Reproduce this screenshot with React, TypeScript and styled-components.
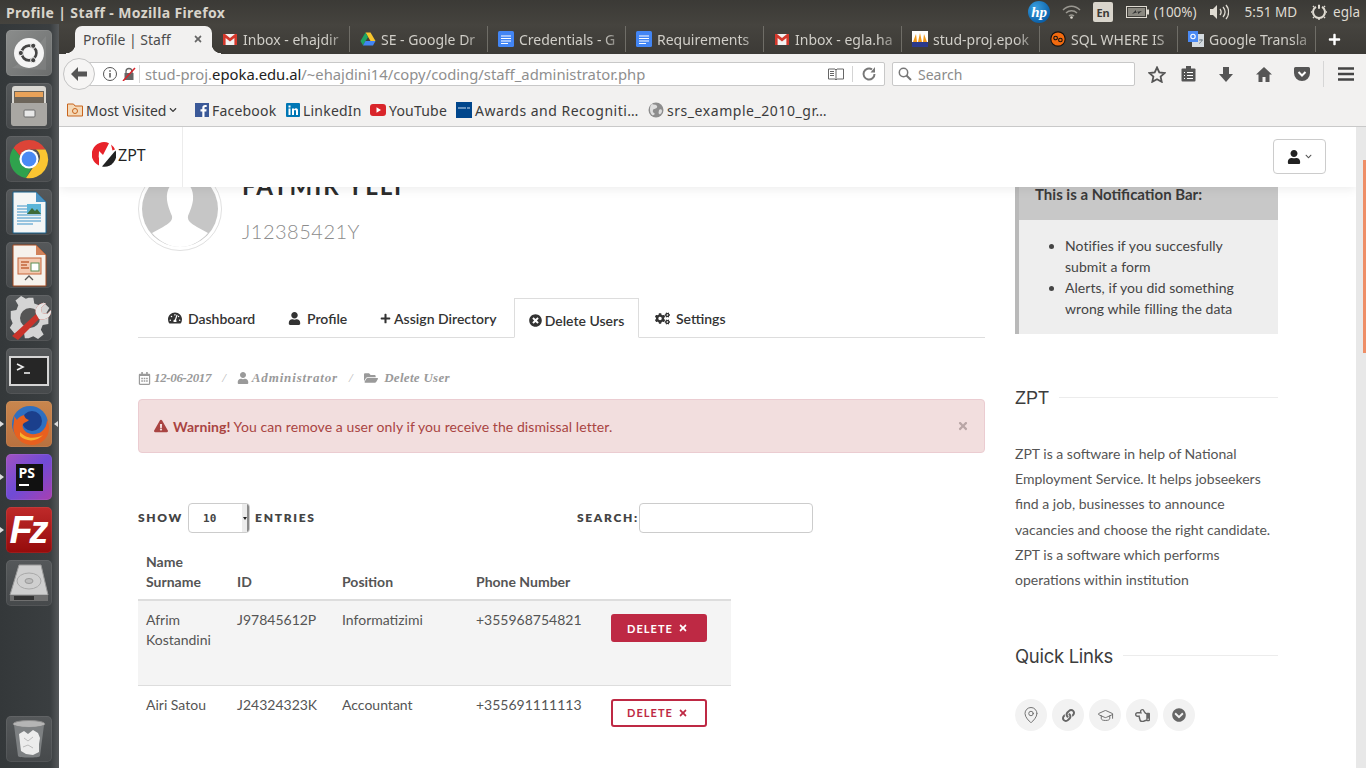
import React from "react";
import styled, { createGlobalStyle } from "styled-components";
import {
  FaTachometerAlt, FaUser, FaPlus, FaTimesCircle, FaCogs, FaRegCalendarAlt, FaFolderOpen,
  FaExclamationTriangle, FaTimes, FaLink, FaRegHandPointLeft, FaChevronCircleDown, FaChevronDown,
} from "react-icons/fa";
import { MapPin, GraduationCap } from "lucide-react";

const UI = `"Noto Sans", "Open Sans", sans-serif`;
const LATO = `Lato, "Open Sans", sans-serif`;

const Global = createGlobalStyle`
  html, body { margin: 0; padding: 0; background: #fff; overflow: hidden; }
  * { box-sizing: border-box; }
`;

const Screen = styled.div`
  width: 1366px; height: 768px; overflow: hidden; display: flex; flex-direction: column;
  font-family: ${LATO}; color: #555;
`;

/* ---------- top panel ---------- */
const TopPanel = styled.div`
  height: 24px; flex: none; display: flex; align-items: center; padding-left: 6px;
  background: linear-gradient(#3b3a36, #45433e); color: #dfdbd2; font-family: ${UI};
`;
const WindowTitle = styled.div`font-size: 14px; font-weight: 700; color: #d8d4cb; letter-spacing: .38px;`;
const Tray = styled.div`margin-left: auto; display: flex; align-items: center; height: 24px; color: #dfdbd2; font-size: 13.5px;`;
const HpBadge = styled.div`
  width: 22px; height: 22px; border-radius: 50%; margin-right: 12px;
  background: radial-gradient(circle at 35% 30%, #3aa0e0, #0a5fa8 75%);
  color: #fff; font: italic 700 15px "Liberation Serif", serif; display: flex; align-items: center; justify-content: center;
`;
const LangBadge = styled.div`
  width: 20px; height: 20px; margin: 0 13px 0 12px; background: #d9d5cc; color: #3c3b37; border-radius: 2px;
  font: 700 11px ${UI}; display: flex; align-items: center; justify-content: center;
`;
const TrayText = styled.span<{ $l?: number; $r?: number }>`
  margin-left: ${(p) => p.$l ?? 0}px; margin-right: ${(p) => p.$r ?? 0}px; white-space: nowrap;
`;

/* ---------- body ---------- */
const Body = styled.div`flex: 1; min-height: 0; display: flex;`;

const Launcher = styled.div`
  width: 59px; flex: none; padding: 6px 0 6px 6px; display: flex; flex-direction: column; gap: 7px;
  background: linear-gradient(90deg, #34383a 0%, #3a3e40 85%, #55585a 100%);
`;
const Tile = styled.div<{ $bg?: string; $push?: boolean }>`
  position: relative; width: 46px; height: 46px; flex: none; border-radius: 5px;
  background: ${(p) => p.$bg ?? "linear-gradient(#55585a, #46494b)"};
  box-shadow: inset 0 0 0 1px rgba(255,255,255,.07);
  margin-top: ${(p) => (p.$push ? "auto" : "0")};
  display: flex; align-items: center; justify-content: center;
`;
const PipLeft = styled.i`
  position: absolute; left: -6px; top: 20px; width: 0; height: 0;
  border-left: 4px solid #dcdcdc; border-top: 3.5px solid transparent; border-bottom: 3.5px solid transparent;
`;
const PipRight = styled.i`
  position: absolute; right: -6px; top: 20px; width: 0; height: 0;
  border-right: 4px solid #dcdcdc; border-top: 3.5px solid transparent; border-bottom: 3.5px solid transparent;
`;
const PhpBlock = styled.div`
  width: 27px; height: 27px; background: #111; color: #fff; font: 700 14px/15px "Open Sans", sans-serif; padding: 1px 0 0 3px;
`;
const PhpDash = styled.div`width: 10px; height: 2px; background: #fff; margin-top: 4px;`;
const FzText = styled.div`color: #fff; font: italic 700 38px/46px "Liberation Sans", sans-serif; letter-spacing: -3px; padding-right: 3px;`;

const Main = styled.div`flex: 1; min-width: 0; display: flex; flex-direction: column;`;

/* ---------- tab strip ---------- */
const TabStrip = styled.div`
  height: 30px; flex: none; display: flex; align-items: flex-end; padding-left: 16px;
  background: linear-gradient(#46443f, #3c3a36);
`;
const ActiveTab = styled.div`
  position: relative; z-index: 1;
  width: 137px; height: 28px; flex: none; background: #f2f1f0; border-radius: 7px 7px 0 0;
  display: flex; align-items: center; padding: 0 9px 2px 8px; font: 14px ${UI}; color: #4c4c4c;
  &::before, &::after { content: ""; position: absolute; bottom: 0; width: 9px; height: 10px; }
  &::before { left: -9px; background: radial-gradient(circle at 0 0, transparent 9px, #f2f1f0 9.5px); }
  &::after { right: -9px; background: radial-gradient(circle at 100% 0, transparent 9px, #f2f1f0 9.5px); }
`;
const CloseX = styled.span`margin-left: auto; color: #666; display: flex;`;
const BrowserTab = styled.div`
  width: 138px; height: 26px; margin-bottom: 2px; flex: none; display: flex; align-items: center; gap: 5px; padding: 0 2px 0 10px;
  border-right: 1px solid #6f6d67; font: 14px ${UI}; color: #d0cec8;
`;
const TabLabel = styled.span`
  white-space: nowrap; flex: 1; min-width: 0;
  -webkit-mask-image: linear-gradient(90deg, #000 80%, rgba(0,0,0,.25) 100%);
  mask-image: linear-gradient(90deg, #000 80%, rgba(0,0,0,.25) 100%);
`;
const NewTab = styled.div`margin-left: 12px; margin-bottom: 2px; height: 26px; display: flex; align-items: center; color: #fff;`;

/* ---------- nav bar ---------- */
const NavBar = styled.div`
  height: 36px; flex: none; background: #f2f1f0; display: flex; align-items: center; padding: 4px 0 0 4px;
`;
const BackButton = styled.div`
  width: 32px; height: 32px; flex: none; border-radius: 50%; background: #f6f5f4; border: 1px solid #c4c4c4;
  display: flex; align-items: center; justify-content: center; z-index: 1;
`;
const UrlBar = styled.div`
  width: 806px; height: 24px; margin-left: -16px; flex: none; background: #fff; border: 1px solid #c8c8c8; border-radius: 2px;
  display: flex; align-items: center; padding: 0 6px 0 22px; font: 14.8px ${UI}; color: #8f8f8f;
`;
const UrlText = styled.div`margin-left: 3px; padding-left: 5px; border-left: 1px solid #d8d8d8; white-space: nowrap; flex: 1; line-height: 18px;`;
const Host = styled.span`color: #222;`;
const UrlEnd = styled.div`display: flex; align-items: center; gap: 8px;`;
const Rule = styled.i`width: 1px; height: 16px; background: #d4d4d4;`;
const SearchBar = styled.div`
  width: 243px; height: 24px; margin-left: 7px; flex: none; background: #fff; border: 1px solid #c8c8c8; border-radius: 2px;
  display: flex; align-items: center; gap: 6px; padding-left: 5px; font: 14px ${UI}; color: #8b8b8b;
`;
const Slot = styled.div<{ $w: number; $sep?: boolean; $mr?: number; $ml?: number }>`
  width: ${(p) => p.$w}px; margin-right: ${(p) => p.$mr ?? 0}px; margin-left: ${(p) => p.$ml ?? 0}px; height: 26px; flex: none;
  display: flex; align-items: center; justify-content: center;
  border-left: ${(p) => (p.$sep ? "1px solid #d6d6d6" : "0")};
`;

/* ---------- bookmarks ---------- */
const Bookmarks = styled.div`
  height: 37px; flex: none; background: #f2f1f0; border-bottom: 1px solid #c9c9c9;
  display: flex; align-items: center; padding: 4px 0 0 8px; font: 14px ${UI}; color: #3c3c3c;
`;
const Mark = styled.div<{ $w: number; $ls?: number }>`
  width: ${(p) => p.$w}px; flex: none; display: flex; align-items: center; gap: 3px; white-space: nowrap;
  letter-spacing: ${(p) => p.$ls ?? 0}px;
`;

/* ---------- page ---------- */
const PageRow = styled.div`flex: 1; min-height: 0; display: flex;`;
const PageMain = styled.div`flex: 1; min-width: 0; overflow: hidden; background: #fff;`;
const ScrollTrack = styled.div`width: 10px; flex: none; background: #e8e8e8; padding: 33px 0 0 7px;`;
const ScrollThumb = styled.div`width: 3px; height: 193px; background: #ee8e66;`;

const Header = styled.header`
  position: relative; z-index: 2; height: 60px; background: #fff; box-shadow: 0 2px 10px rgba(0,0,0,.08);
  display: flex; align-items: stretch; padding: 0 30px 0 33px;
`;
const Brand = styled.div`
  width: 91px; border-right: 1px solid #ececec; display: flex; align-items: center; gap: 2px;
  font: 16px "Open Sans", sans-serif; color: #222; padding-bottom: 5px;
`;
const UserButton = styled.div`
  margin: 12px 0 0 auto; width: 53px; height: 35px; border: 1px solid #ccc; border-radius: 4px;
  display: flex; align-items: center; justify-content: center; gap: 4px; color: #222;
`;

const Columns = styled.div`
  display: grid; grid-template-columns: 847px 263px; column-gap: 30px; padding-left: 79px; margin-top: -21px;
`;
const LeftCol = styled.main`min-width: 0;`;
const RightCol = styled.aside`min-width: 0;`;

const ProfileRow = styled.div`display: flex; gap: 20px; height: 84px; padding-top: 1px;`;
const ProfileName = styled.h1`
  margin: 0; font: 700 24px/28px ${LATO}; color: #2c2c2c; letter-spacing: 2px; padding-top: 5px;
`;
const ProfileId = styled.div`margin-top: 19px; font: 300 20px/24px ${LATO}; color: #8c8c8c; letter-spacing: .5px;`;

const Tabs = styled.nav`
  margin-top: 48px; height: 40px; display: flex; align-items: stretch; border-bottom: 1px solid #ddd; padding-left: 30px;
`;
const TabLink = styled.div<{ $w: number }>`
  width: ${(p) => p.$w}px; flex: none; display: flex; align-items: center; gap: 6px; font: 600 14px ${LATO}; color: #333; padding-top: 1px;
`;
const TabCurrent = styled.div`
  width: 125px; height: 40px; flex: none; background: #fff; border: 1px solid #ddd; border-bottom-color: #fff;
  display: flex; align-items: center; justify-content: center; gap: 3px; font: 600 14px ${LATO}; color: #333; padding-top: 4px; margin-right: 16px;
`;

const Crumbs = styled.div`
  margin-top: 31px; height: 18px; display: flex; align-items: center; color: #9a9a9a;
  font: italic 700 13px "Liberation Serif", serif;
`;
const CrumbItem = styled.span<{ $ls: number }>`display: inline-flex; align-items: center; gap: 3px; letter-spacing: ${(p) => p.$ls}px;`;
const CrumbSep = styled.span`margin: 0 11px; font-weight: 400; color: #bbb;`;

const Alert = styled.div`
  margin-top: 12px; height: 54px; background: #f2dede; border: 1px solid #ebccd1; border-radius: 4px; color: #a94442;
  display: flex; align-items: center; padding: 0 15px; font: 14px ${LATO}; letter-spacing: .08px; white-space: pre;
`;
const AlertStrong = styled.strong`margin: 0 0 0 5px; font-weight: 700;`;
const AlertClose = styled.span`margin-left: auto; color: #b9a6a6; display: flex;`;

const Controls = styled.div`
  margin-top: 50px; width: 675px; height: 30px; display: flex; align-items: center; justify-content: space-between;
`;
const ControlGroup = styled.div`display: flex; align-items: center;`;
const ControlText = styled.span<{ $l?: number; $r?: number }>`
  font: 800 12px ${LATO}; letter-spacing: 1.7px; color: #444; text-transform: uppercase; padding-bottom: 2px;
  margin-left: ${(p) => p.$l ?? 0}px; margin-right: ${(p) => p.$r ?? 0}px;
`;
const SelectBox = styled.div`
  width: 62px; height: 30px; border: 1px solid #ccc; border-radius: 4px; display: flex; align-items: center;
  justify-content: space-between; padding-left: 14px; font: 700 11px "DejaVu Sans Mono", monospace; color: #444; overflow: hidden;
`;
const SelectArrow = styled.span`
  width: 7px; height: 100%; background: #ececec; border-right: 2px solid #8a8a8a; display: flex; align-items: center; justify-content: center;
  &::after { content: ""; border-top: 3px solid #222; border-left: 2.5px solid transparent; border-right: 2.5px solid transparent; }
`;
const SearchInput = styled.input`width: 174px; height: 30px; border: 1px solid #ccc; border-radius: 4px; background: #fff; outline: none;`;

const Table = styled.table`
  margin-top: 19px; width: 593px; border-collapse: collapse; table-layout: fixed; font: 14px/20px ${LATO}; color: #555;
`;
const Th = styled.th<{ $w: number }>`
  width: ${(p) => p.$w}px; text-align: left; vertical-align: bottom; padding: 0 8px 7px; font-weight: 700; color: #555;
  border-bottom: 2px solid #ddd;
`;
const Tr = styled.tr<{ $odd?: boolean; $h: number }>`
  height: ${(p) => p.$h}px; background: ${(p) => (p.$odd ? "#f4f4f4" : "#fff")};
  border-bottom: ${(p) => (p.$odd ? "1px solid #ddd" : "0")};
`;
const Td = styled.td`padding: 9px 8px; vertical-align: top;`;
const TdButton = styled.td`padding: 13px 8px 0; vertical-align: top;`;
const DeleteBtn = styled.button<{ $filled?: boolean }>`
  width: 96px; height: 28px; border-radius: 3px; border: 2px solid #be2944; padding: 0 0 0 14px;
  background: ${(p) => (p.$filled ? "#be2944" : "#fff")}; color: ${(p) => (p.$filled ? "#fff" : "#be2944")};
  font: 700 11px ${LATO}; letter-spacing: 1.05px; display: flex; align-items: center; gap: 5px;
`;

const NoteBox = styled.div`border-left: 4px solid #b9b9b9; background: #eee;`;
const NoteHead = styled.div`
  height: 54px; background: #c8c8c8; padding: 18px 0 0 16px; font: 700 15px/20px ${LATO}; color: #3a3a3a;
`;
const NoteList = styled.ul`margin: 0; padding: 15px 30px 15px 46px; font: 14px/21px ${LATO}; color: #444; letter-spacing: .05px;`;
const SideHeading = styled.div<{ $top: number }>`
  margin-top: ${(p) => p.$top}px; height: 24px; display: flex; align-items: center; gap: 10px;
  font: 18px/24px "Liberation Sans", sans-serif; color: #3d3d3d;
  &::after { content: ""; flex: 1; height: 1px; background: #ececec; margin-top: -1px; }
`;
const QuickHeading = styled(SideHeading)`font-family: Inter, sans-serif; font-size: 18.5px; letter-spacing: -.3px;`;
const SideText = styled.p`margin: 31px 0 0; font: 14px/25.2px ${LATO}; color: #555;`;
const Circles = styled.div`margin-top: 31px; display: flex; gap: 5px;`;
const Circle = styled.div`
  width: 32px; height: 32px; border-radius: 50%; background: #f2f2f2; color: #666; display: flex; align-items: center; justify-content: center;
`;

/* ---------- small drawings ---------- */
const Gmail = () => (
  <svg width="16" height="16" viewBox="0 0 16 16" style={{ flex: "none" }}>
    <rect x="1" y="3" width="14" height="11" fill="#f2f2f2" />
    <path d="M1 3h2l5 4 5-4h2v11h-2.6V7L8 10.5 3.6 7v7H1z" fill="#d3382c" />
  </svg>
);
const Drive = () => (
  <svg width="16" height="16" viewBox="0 0 16 16" style={{ flex: "none" }}>
    <path d="M5.5 1.5h5L15.5 10h-5z" fill="#f7c52d" />
    <path d="M5.5 1.5 .5 10 3 14.5 8 6z" fill="#1fa463" />
    <path d="M3 14.5h10L15.5 10h-10z" fill="#4285f4" />
  </svg>
);
const Docs = () => (
  <svg width="16" height="16" viewBox="0 0 16 16" style={{ flex: "none" }}>
    <rect width="16" height="16" rx="1.5" fill="#4285f4" />
    <path d="M3 5h10M3 7.5h10M3 10h10M3 12.5h7" stroke="#fff" strokeWidth="1.1" />
  </svg>
);
const Pma = () => (
  <svg width="16" height="16" viewBox="0 0 16 16" style={{ flex: "none" }}>
    <rect width="16" height="16" fill="#fff" />
    <path d="M1 11 4 3l1 8zM6 11l2-9 2 9zM11 11l1-8 3 8z" fill="#f29a1c" />
    <rect y="11" width="16" height="5" fill="#2b3a8c" />
  </svg>
);
const SqlIcon = () => (
  <svg width="16" height="16" viewBox="0 0 16 16" style={{ flex: "none" }}>
    <circle cx="8" cy="8" r="7.7" fill="#111" />
    <circle cx="8" cy="8" r="6.6" fill="#f26a0f" />
    <circle cx="5.6" cy="7" r="1.8" fill="none" stroke="#111" strokeWidth="1.1" />
    <circle cx="10.4" cy="9" r="1.8" fill="none" stroke="#111" strokeWidth="1.1" />
  </svg>
);
const Translate = () => (
  <svg width="16" height="16" viewBox="0 0 16 16" style={{ flex: "none" }}>
    <rect x="4" y="3" width="12" height="13" fill="#d5dbe0" />
    <rect width="10" height="11" fill="#4a8af4" />
    <path d="M11 9h4M13 8v1M14 9c-.5 2-2 3-3 3.5" stroke="#6c7a85" strokeWidth=".9" fill="none" />
    <circle cx="5" cy="5.5" r="2.2" fill="none" stroke="#fff" strokeWidth="1.1" />
  </svg>
);
const Grey = "#555";

const UbuntuLogo = () => (
  <svg width="46" height="46" viewBox="0 0 46 46">
    <path d="M6 38C20 30 30 18 40 6v34z" fill="rgba(255,255,255,.08)" />
    <circle cx="23" cy="23" r="15" fill="#f4f4f4" />
    <circle cx="23" cy="23" r="7.4" fill="none" stroke="#444" strokeWidth="2.6" />
    <circle cx="14.8" cy="23" r="2.6" fill="#444" stroke="#f4f4f4" />
    <circle cx="27.2" cy="15.8" r="2.6" fill="#444" stroke="#f4f4f4" />
    <circle cx="27.2" cy="30.2" r="2.6" fill="#444" stroke="#f4f4f4" />
  </svg>
);
const FilesIcon = () => (
  <svg width="46" height="46" viewBox="0 0 46 46">
    <rect x="6" y="3" width="34" height="40" rx="3" fill="#d9d7d2" />
    <rect x="8" y="8" width="30" height="12" fill="#6d655a" />
    <rect x="9" y="9" width="28" height="5" fill="#e9a259" />
    <path d="M5 20h36v20a3 3 0 0 1-3 3H8a3 3 0 0 1-3-3z" fill="#a9a7a3" />
    <rect x="18" y="27" width="11" height="7" rx="1" fill="#e8e8e8" stroke="#6d6d6d" />
  </svg>
);
const ChromeIcon = () => (
  <svg width="46" height="46" viewBox="0 0 46 46">
    <path d="M23 4a19 19 0 0 1 16.5 9.5H23a9.5 9.5 0 0 0-9 6.5L7.5 12A19 19 0 0 1 23 4z" fill="#dc4437" />
    <path d="M7.5 12 14 20a9.5 9.5 0 0 0 11.5 12L20 42A19 19 0 0 1 7.5 12z" fill="#2fa24d" />
    <path d="M39.5 13.5A19 19 0 0 1 20 42l8-12a9.5 9.5 0 0 0 2-16.5z" fill="#fbc531" />
    <circle cx="23" cy="23" r="9.6" fill="#fff" />
    <circle cx="23" cy="23" r="7.4" fill="#4a8af4" />
  </svg>
);
const WriterIcon = () => (
  <svg width="46" height="46" viewBox="0 0 46 46">
    <path d="M7 3h23l10 10v31H7z" fill="#f4f6f6" stroke="#16608c" strokeWidth="1" />
    <path d="M30 3l10 10H30z" fill="#4c93c2" />
    <path d="M11 17h12M11 20h12M11 23h12M11 26h24M11 29h24M11 32h24M11 35h16" stroke="#78b4d8" strokeWidth="1.4" />
    <rect x="21" y="15" width="14" height="10" fill="#5cb5d8" />
    <path d="M21 25l5-6 3 3 2-2 4 5z" fill="#3e6b39" />
  </svg>
);
const ImpressIcon = () => (
  <svg width="46" height="46" viewBox="0 0 46 46">
    <path d="M7 3h23l10 10v31H7z" fill="#f6f2ec" stroke="#a3481f" strokeWidth="1" />
    <path d="M30 3l10 10H30z" fill="#d0825a" />
    <rect x="12" y="16" width="23" height="16" fill="#f3c9b0" stroke="#c4653a" />
    <path d="M15 20h8M15 23h6M15 26h8" stroke="#c4653a" strokeWidth="1.3" />
    <rect x="25" y="21" width="8" height="8" fill="#fff" stroke="#5d8f54" />
    <path d="M19 38l4-4 4 4" fill="none" stroke="#555" strokeWidth="1.3" />
  </svg>
);
const SettingsIcon = () => (
  <svg width="46" height="46" viewBox="0 0 46 46">
    <path d="M19 4h9l1 6 5 2 5-3 6 6-3 5 2 5 0 7-6 1-2 5 3 5-6 5-5-3-5 2H19l-1-6-5-2-5 3-5-6 3-5-2-5v-8l6-1 2-5-3-5 6-5 5 3 3-1z" fill="#d4d4d4" transform="translate(1 -1) scale(.94)" />
    <circle cx="24" cy="23" r="10" fill="#555" />
    <path d="M6 41 30 19c-2-6 3-12 10-11l-5 5 1 5 5 1 4-4c1 7-6 11-12 9L12 45z" fill="#c9332a" />
    <path d="M30 19c-2-6 3-12 10-11l-5 5 1 5 5 1 4-4c1 7-6 11-12 9z" fill="#e4e4e4" />
  </svg>
);
const TerminalIcon = () => (
  <svg width="46" height="46" viewBox="0 0 46 46">
    <rect x="3" y="8" width="40" height="30" fill="#d5d5d5" />
    <rect x="5" y="10" width="36" height="26" fill="#262626" />
    <path d="M11 16l6 3-6 3" fill="none" stroke="#eee" strokeWidth="1.6" />
    <path d="M18 25h6" stroke="#eee" strokeWidth="1.6" />
  </svg>
);
const FirefoxIcon = () => (
  <svg width="46" height="46" viewBox="0 0 46 46">
    <circle cx="24" cy="23" r="18" fill="#2f6fc0" />
    <circle cx="26" cy="20" r="10" fill="#1b3f8c" />
    <path d="M8 15c1 5-2 10 0 16 3 9 11 13 18 13 9 0 17-7 17-17 0-3-1-6-2-8 0 5-2 9-6 12-5 3-12 3-16-1-2-2-3-5-2-7 2-2 4-2 6-4-3-1-4-2-5-5-4 1-6 3-7 5-1-1-2-3-3-4z" fill="#e8601f" />
    <path d="M14 35c6 6 17 6 23-1-5 3-13 4-18 1-2-1-4-3-5-4z" fill="#f7b22e" />
  </svg>
);
const DiskIcon = () => (
  <svg width="46" height="46" viewBox="0 0 46 46">
    <path d="M13 5h22l7 30H4z" fill="#cfcfcf" stroke="#9a9a9a" />
    <ellipse cx="23" cy="21" rx="12" ry="8" fill="none" stroke="#a9a9a9" />
    <ellipse cx="23" cy="21" rx="4" ry="2.5" fill="#bdbdbd" stroke="#999" />
    <path d="M4 35h38v6H4z" fill="#6f6f6f" />
    <rect x="8" y="36" width="20" height="4" fill="#333" />
  </svg>
);
const TrashIcon = () => (
  <svg width="46" height="46" viewBox="0 0 46 46">
    <ellipse cx="23" cy="8" rx="16" ry="3.5" fill="#b5b5b5" stroke="#8b8b8b" />
    <path d="M8 9l4 31c0 2 22 2 22 0l4-31c-4 3-26 3-30 0z" fill="#7d8082" />
    <path d="M13 18l5-3 4 3 5-4 5 3 2 5-1 6 0 8-6 3-7-1-5-3-1-8z" fill="#ececec" />
    <path d="M18 22l4 3 5-4M17 31l5-2 5 3" stroke="#bbb" fill="none" />
  </svg>
);
const ZptMark = () => (
  <svg width="24" height="25" viewBox="0 0 24 25">
    <path d="M7 23.6A12 12 0 0 1 17 1.2L11 13l-4-4z" fill="#e8232a" />
    <path d="M6 9.5 7.5 20 18 2c3 2 6 6 6 10.500a12 12 0 0 1-15 11.700z" fill="#fff" />
    <path d="M23.500 8.500A12 12 0 0 1 10 24.500z" fill="#222" />
    <path d="M19 2.500a12 12 0 0 1 4 5l-2.500 1z" fill="#e8232a" />
  </svg>
);
const Avatar = () => (
  <svg width="84" height="84" viewBox="0 0 84 84" style={{ flex: "none" }}>
    <circle cx="42" cy="42" r="41.500" fill="#fff" stroke="#e0e0e0" />
    <circle cx="42" cy="42" r="38" fill="#c6c6c6" />
    <path d="M42 14c-9 0-14 8-13 19 1 7 3 11 5 16 1 5-4 8-9 11l-11 6c7 8 17 14 28 14s21-6 28-14l-11-6c-5-3-10-6-9-11 2-5 4-9 5-16 1-11-4-19-13-19z" fill="#fff" />
  </svg>
);

const Users = [
  { n: <>Afrim<br />Kostandini</>, id: "J97845612P", p: "Informatizimi", t: "+355968754821" },
  { n: "Airi Satou", id: "J24324323K", p: "Accountant", t: "+355691111113" },
];
const OtherTabs: [React.ReactNode, string][] = [
  [<Gmail />, "Inbox - ehajdir"], [<Drive />, "SE - Google Dr"], [<Docs />, "Credentials - G"],
  [<Docs />, "Requirements"], [<Gmail />, "Inbox - egla.ha"], [<Pma />, "stud-proj.epok"],
  [<SqlIcon />, "SQL WHERE IS"], [<Translate />, "Google Transla"],
];

export default function App() {
  return (
    <Screen>
      <Global />
      <TopPanel>
        <WindowTitle>Profile | Staff - Mozilla Firefox</WindowTitle>
        <Tray>
          <HpBadge>hp</HpBadge>
          <svg width="19" height="14" viewBox="0 0 19 14"><path d="M1 5c5-5 12-5 17 0M4 8c3-3 8-3 11 0M7 11c1.500-1.300 3.500-1.300 5 0" stroke="#9a9891" strokeWidth="1.500" fill="none" /><circle cx="9.500" cy="12.500" r="1.300" fill="#dfdbd2" /></svg>
          <LangBadge>En</LangBadge>
          <svg width="23" height="12" viewBox="0 0 23 12"><rect x=".5" y=".5" width="20" height="11" fill="none" stroke="#dfdbd2" /><rect x="2" y="2" width="17" height="8" fill="#8a8880" /><rect x="21" y="3.500" width="2" height="5" fill="#dfdbd2" /><path d="M6 8l6-2v2l4-3-6 1V4z" fill="#333" /></svg>
          <TrayText $l={5}>(100%)</TrayText>
          <svg width="20" height="16" viewBox="0 0 20 16" style={{ marginLeft: 12 }}><path d="M1 5h3l4-4v14l-4-4H1z" fill="#dfdbd2" /><path d="M11 5c1.500 2 1.500 4 0 6M14 3c2.500 3 2.500 7 0 10M17 1c3.500 4 3.500 10 0 14" stroke="#dfdbd2" strokeWidth="1.300" fill="none" /></svg>
          <TrayText $l={16}>5:51 MD</TrayText>
          <svg width="16" height="16" viewBox="0 0 16 16" style={{ marginLeft: 14 }}><path d="M8 .8v4M5 2.800a6 6 0 1 0 6 0" stroke="#dfdbd2" strokeWidth="2" fill="none" /><path d="M8 13v3M1 8h-1M16 8h-1M3 3 2 2M13 3l1-1M3 13l-1 1M13 13l1 1" stroke="#dfdbd2" strokeWidth="1.500" /></svg>
          <TrayText $l={6} $r={6}>egla</TrayText>
        </Tray>
      </TopPanel>

      <Body>
        <Launcher>
          <Tile $bg="linear-gradient(135deg, #8b8d8c, #6b6d6d)"><UbuntuLogo /></Tile>
          <Tile><FilesIcon /></Tile>
          <Tile><ChromeIcon /></Tile>
          <Tile><WriterIcon /></Tile>
          <Tile><ImpressIcon /></Tile>
          <Tile><SettingsIcon /></Tile>
          <Tile><TerminalIcon /></Tile>
          <Tile $bg="linear-gradient(#c8864e, #b9713f)"><PipLeft /><PipRight /><FirefoxIcon /></Tile>
          <Tile $bg="linear-gradient(135deg, #a152c0 0%, #6f4bd6 50%, #a83fb0 100%)">
            <PipLeft />
            <PhpBlock>PS<PhpDash /></PhpBlock>
          </Tile>
          <Tile $bg="linear-gradient(#bf2a2a, #950b0b)"><PipLeft /><FzText>Fz</FzText></Tile>
          <Tile><DiskIcon /></Tile>
          <Tile $push><TrashIcon /></Tile>
        </Launcher>

        <Main>
          <TabStrip>
            <ActiveTab>Profile | Staff<CloseX><FaTimes size={10} /></CloseX></ActiveTab>
            {OtherTabs.map(([icon, label]) => (
              <BrowserTab key={label}>{icon}<TabLabel>{label}</TabLabel></BrowserTab>
            ))}
            <NewTab><FaPlus size={13} /></NewTab>
          </TabStrip>

          <NavBar>
            <BackButton>
              <svg width="18" height="16" viewBox="0 0 18 16"><path d="M8 1 1 8l7 7V10.500h9v-5H8z" fill="#555" /></svg>
            </BackButton>
            <UrlBar>
              <svg width="16" height="16" viewBox="0 0 16 16" style={{ flex: "none" }}><circle cx="8" cy="8" r="6.500" fill="none" stroke="#555" /><path d="M8 7v4.500M8 4.200v1.500" stroke="#555" strokeWidth="1.500" /></svg>
              <svg width="14" height="14" viewBox="0 0 14 14" style={{ flex: "none", marginLeft: 4 }}><path d="M4 6V4.500a3 3 0 0 1 6 0V6" fill="none" stroke="#666" strokeWidth="1.300" /><rect x="2.500" y="6" width="9" height="7" fill="#666" /><path d="M1 14 13 1" stroke="#d9242b" strokeWidth="1.500" /></svg>
              <UrlText>stud-proj.<Host>epoka.edu.al</Host>/~ehajdini14/copy/coding/staff_administrator.php</UrlText>
              <UrlEnd>
                <svg width="16" height="13" viewBox="0 0 16 13"><path d="M.5 1h6.500l1 1 1-1h6.500v10H9l-1 1-1-1H.5z" fill="none" stroke="#666" /><path d="M2 3.500h4M2 5.500h4M2 7.500h4" stroke="#666" /><path d="M8 2v9" stroke="#666" /></svg>
                <Rule />
                <svg width="16" height="16" viewBox="0 0 16 16" style={{ marginRight: 1 }}><path d="M13.500 8A5.500 5.500 0 1 1 11 3.400" fill="none" stroke="#777" strokeWidth="2" /><path d="M9.500 6.500 14 1v5.500z" fill="#777" /></svg>
              </UrlEnd>
            </UrlBar>
            <SearchBar>
              <svg width="14" height="14" viewBox="0 0 14 14"><circle cx="5.500" cy="5.500" r="4.200" fill="none" stroke="#777" strokeWidth="1.500" /><path d="M8.500 8.500 13 13" stroke="#777" strokeWidth="2" /></svg>
              Search
            </SearchBar>
            <Slot $w={34} $ml={5}>
              <svg width="18" height="17" viewBox="0 0 18 17"><path d="M9 1.500 11.300 6.500l5.200.6-3.900 3.500 1.100 5.200L9 13.200 4.300 15.800l1.100-5.200L1.500 7.100l5.200-.6z" fill="none" stroke={Grey} strokeWidth="1.800" /></svg>
            </Slot>
            <Slot $w={28} $mr={5}>
              <svg width="15" height="16" viewBox="0 0 15 16"><rect x=".5" y="2.500" width="14" height="13" rx="1" fill={Grey} /><rect x="5" y="0" width="5" height="4" fill={Grey} /><path d="M3 6.500h1M6 6.500h6M3 9.500h1M6 9.500h6M3 12.500h1M6 12.500h6" stroke="#fff" /></svg>
            </Slot>
            <Slot $w={38}>
              <svg width="14" height="15" viewBox="0 0 14 15"><path d="M4 0h6v7h4l-7 8-7-8h4z" fill={Grey} /></svg>
            </Slot>
            <Slot $w={38}>
              <svg width="16" height="15" viewBox="0 0 16 15"><path d="M8 0 0 7.500h2.500V15h4v-5h3v5h4V7.500H16z" fill={Grey} /></svg>
            </Slot>
            <Slot $w={38}>
              <svg width="16" height="14" viewBox="0 0 16 14"><path d="M1.500 0h13A1.500 1.500 0 0 1 16 1.500V6a8 8 0 0 1-16 0V1.500A1.500 1.500 0 0 1 1.500 0z" fill={Grey} /><path d="M4.500 5 8 8.500 11.500 5" stroke="#fff" strokeWidth="2" fill="none" /></svg>
            </Slot>
            <Slot $w={44} $ml={2} $sep>
              <svg width="16" height="14" viewBox="0 0 16 14"><path d="M0 1.500h16M0 7h16M0 12.500h16" stroke="#444" strokeWidth="2.400" /></svg>
            </Slot>
          </NavBar>

          <Bookmarks>
            <Mark $w={128}>
              <svg width="16" height="16" viewBox="0 0 16 16" style={{ flex: "none" }}><path d="M.5 2h6l1.500 2h7.500v10H.5z" fill="#f4d9b8" stroke="#c8641c" /><circle cx="8" cy="9" r="2.500" fill="none" stroke="#c8641c" /></svg>
              Most Visited<FaChevronDown size={8} style={{ flex: "none" }} />
            </Mark>
            <Mark $w={91} $ls={.2}>
              <svg width="14" height="14" viewBox="0 0 14 14" style={{ flex: "none" }}><rect width="14" height="14" fill="#3b5998" /><path d="M9.500 14V8.500h1.800l.3-2.200H9.500V5c0-.6.2-1 1-1h1.200V2.100C11.400 2 10.800 2 10.100 2 8.500 2 7.300 3 7.300 4.800v1.500H5.500v2.200h1.800V14z" fill="#fff" /></svg>
              Facebook
            </Mark>
            <Mark $w={84} $ls={.2}>
              <svg width="14" height="14" viewBox="0 0 14 14" style={{ flex: "none" }}><rect width="14" height="14" rx="1" fill="#0077b5" /><path d="M2.500 5.500h2V12h-2zM2.500 2.500h2v2h-2zM6 5.500h2v1c.5-.8 1.200-1.200 2-1.200 1.600 0 2 1 2 2.700v4h-2V8.500c0-.8-.2-1.400-1-1.400S8 7.700 8 8.500V12H6z" fill="#fff" /></svg>
              LinkedIn
            </Mark>
            <Mark $w={86} $ls={.2}>
              <svg width="16" height="12" viewBox="0 0 16 12" style={{ flex: "none" }}><rect width="16" height="12" rx="3" fill="#d9252a" /><path d="M6.500 3.300v5.400L11 6z" fill="#fff" /></svg>
              YouTube
            </Mark>
            <Mark $w={192} $ls={.5}>
              <svg width="16" height="16" viewBox="0 0 16 16" style={{ flex: "none" }}><rect width="16" height="16" fill="#00468c" /><path d="M2 6h8M11 6h3" stroke="#cfe0f2" strokeWidth="1.200" /></svg>
              Awards and Recogniti…
            </Mark>
            <Mark $w={190} $ls={.55}>
              <svg width="16" height="16" viewBox="0 0 16 16" style={{ flex: "none" }}><circle cx="8" cy="8" r="7.500" fill="#8d8d8d" /><path d="M4 2c2 1 4 0 5 2s-2 3-3 3-2 3 0 4-1 3-2 2-2-3-2-5 0-5 2-6zM11 8c1-1 3-1 3 1s-2 4-3 3 0-3 0-4z" fill="#dedede" /></svg>
              srs_example_2010_gr…
            </Mark>
          </Bookmarks>

          <PageRow>
            <PageMain>
              <Header>
                <Brand><ZptMark />ZPT</Brand>
                <UserButton><FaUser size={14} /><FaChevronDown size={7} color="#555" /></UserButton>
              </Header>
              <Columns>
                <LeftCol>
                  <ProfileRow>
                    <Avatar />
                    <div>
                      <ProfileName>FATMIR YLLI</ProfileName>
                      <ProfileId>J12385421Y</ProfileId>
                    </div>
                  </ProfileRow>

                  <Tabs>
                    <TabLink $w={120}><FaTachometerAlt size={14} />Dashboard</TabLink>
                    <TabLink $w={92}><FaUser size={13} />Profile</TabLink>
                    <TabLink $w={134}><FaPlus size={11} style={{ marginRight: -3 }} />Assign Directory</TabLink>
                    <TabCurrent><FaTimesCircle size={13} />Delete Users</TabCurrent>
                    <TabLink $w={90}><FaCogs size={15} />Settings</TabLink>
                  </Tabs>

                  <Crumbs>
                    <CrumbItem $ls={-.35}><FaRegCalendarAlt size={13} />12-06-2017</CrumbItem>
                    <CrumbSep>/</CrumbSep>
                    <CrumbItem $ls={.85}><FaUser size={12} />Administrator</CrumbItem>
                    <CrumbSep>/</CrumbSep>
                    <CrumbItem $ls={.3}><FaFolderOpen size={14} />&nbsp;Delete User</CrumbItem>
                  </Crumbs>

                  <Alert>
                    <FaExclamationTriangle size={14} />
                    <AlertStrong>Warning!</AlertStrong> You can remove a user only if you receive the dismissal letter.
                    <AlertClose><FaTimes size={12} /></AlertClose>
                  </Alert>

                  <Controls>
                    <ControlGroup>
                      <ControlText $r={5}>Show</ControlText>
                      <SelectBox>10<SelectArrow /></SelectBox>
                      <ControlText $l={5}>entries</ControlText>
                    </ControlGroup>
                    <ControlGroup>
                      <ControlText>Search:</ControlText>
                      <SearchInput aria-label="Search" />
                    </ControlGroup>
                  </Controls>

                  <Table>
                    <thead>
                      <tr>
                        <Th $w={91}>Name<br />Surname</Th>
                        <Th $w={105}>ID</Th>
                        <Th $w={134}>Position</Th>
                        <Th $w={135}>Phone Number</Th>
                        <Th $w={128} />
                      </tr>
                    </thead>
                    <tbody>
                      {Users.map((u, i) => (
                        <Tr key={u.id} $odd={i === 0} $h={i === 0 ? 85 : 60}>
                          <Td>{u.n}</Td>
                          <Td>{u.id}</Td>
                          <Td>{u.p}</Td>
                          <Td>{u.t}</Td>
                          <TdButton>
                            <DeleteBtn $filled={i === 0}>DELETE <FaTimes size={10} /></DeleteBtn>
                          </TdButton>
                        </Tr>
                      ))}
                    </tbody>
                  </Table>
                </LeftCol>

                <RightCol>
                  <NoteBox>
                    <NoteHead>This is a Notification Bar:</NoteHead>
                    <NoteList>
                      <li>Notifies if you succesfully submit a form</li>
                      <li>Alerts, if you did something wrong while filling the data</li>
                    </NoteList>
                  </NoteBox>
                  <SideHeading $top={52}>ZPT</SideHeading>
                  <SideText>
                    ZPT is a software in help of National Employment Service. It helps jobseekers find a job, businesses to announce vacancies and choose the right candidate. ZPT is a software which performs operations within institution
                  </SideText>
                  <QuickHeading $top={52}>Quick Links</QuickHeading>
                  <Circles>
                    <Circle><MapPin size={18} strokeWidth={1.2} /></Circle>
                    <Circle><FaLink size={13} /></Circle>
                    <Circle><GraduationCap size={17} strokeWidth={1.3} /></Circle>
                    <Circle><FaRegHandPointLeft size={15} /></Circle>
                    <Circle><FaChevronCircleDown size={14} /></Circle>
                  </Circles>
                </RightCol>
              </Columns>
            </PageMain>
            <ScrollTrack><ScrollThumb /></ScrollTrack>
          </PageRow>
        </Main>
      </Body>
    </Screen>
  );
}
